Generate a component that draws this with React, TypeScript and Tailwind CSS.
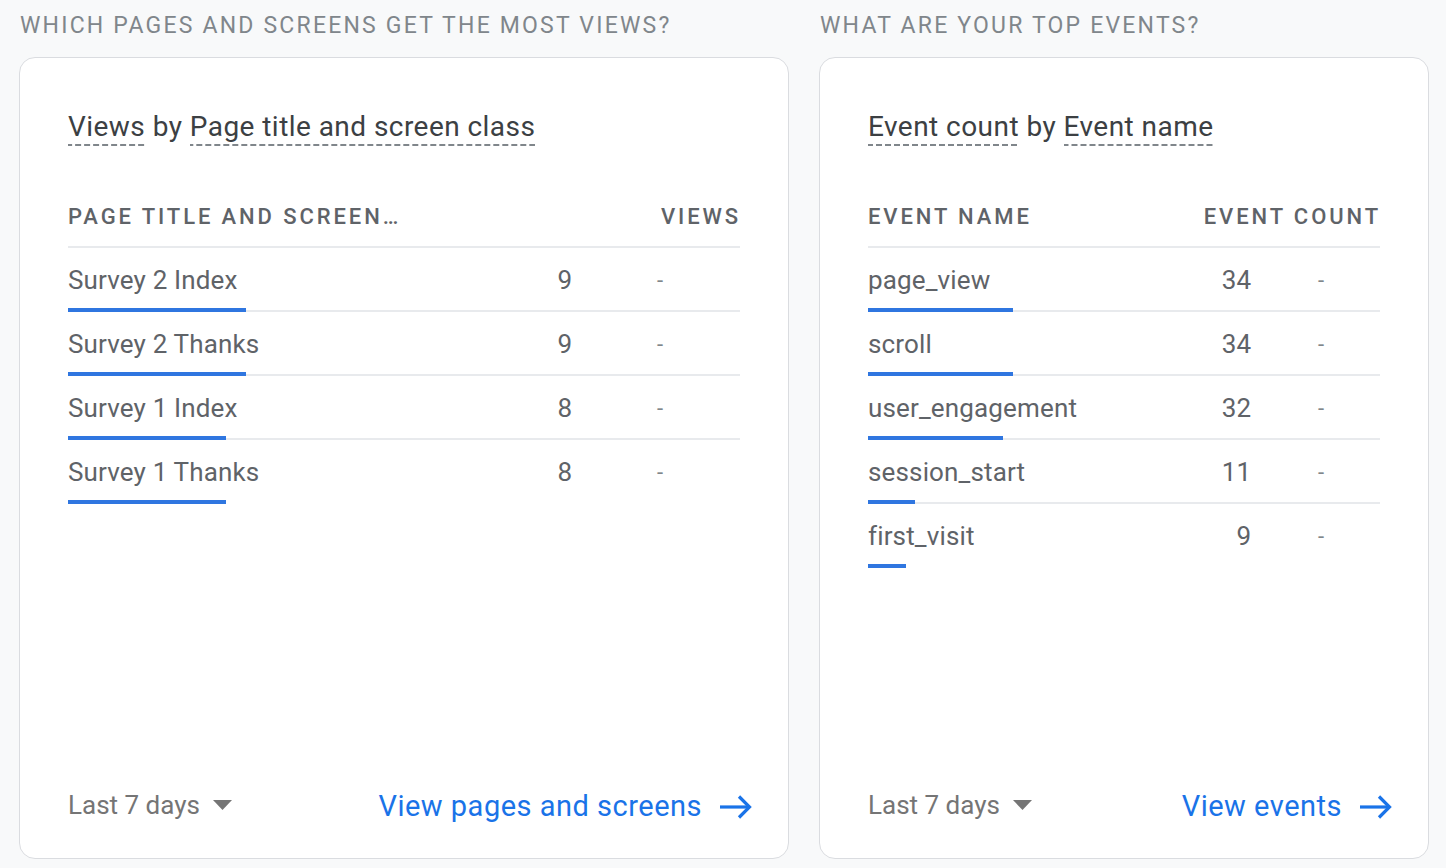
import React from 'react';

type Row = { name: string; value: number; bar: number };

const pageRows: Row[] = [
  { name: 'Survey 2 Index', value: 9, bar: 178 },
  { name: 'Survey 2 Thanks', value: 9, bar: 178 },
  { name: 'Survey 1 Index', value: 8, bar: 158 },
  { name: 'Survey 1 Thanks', value: 8, bar: 158 },
];

const eventRows: Row[] = [
  { name: 'page_view', value: 34, bar: 145 },
  { name: 'scroll', value: 34, bar: 145 },
  { name: 'user_engagement', value: 32, bar: 135 },
  { name: 'session_start', value: 11, bar: 47 },
  { name: 'first_visit', value: 9, bar: 38 },
];

function Dashed({ children }: { children: React.ReactNode }) {
  return (
    <span className="pb-[3px] bg-[linear-gradient(to_right,#80868b_6px,transparent_6px)] bg-[length:9px_2px] bg-repeat-x bg-bottom">
      {children}
    </span>
  );
}

function Arrow() {
  return (
    <svg width="32" height="24" viewBox="0 0 32 24" fill="none" stroke="#1a73e8" strokeWidth="3.2" strokeLinecap="butt" strokeLinejoin="miter">
      <path d="M0 12h29" />
      <path d="M19 1.5 29.5 12 19 22.5" />
    </svg>
  );
}

function Caret() {
  return (
    <svg width="19" height="10" viewBox="0 0 19 10" className="ml-[13px]">
      <path d="M0 0h19L9.5 10z" fill="#757575" />
    </svg>
  );
}

function Card({
  title,
  colA,
  colB,
  rows,
  numRight,
  dashLeft,
  link,
}: {
  title: React.ReactNode;
  colA: string;
  colB: string;
  rows: Row[];
  numRight: number;
  dashLeft: number;
  link: string;
}) {
  return (
    <div className="flex-1 flex flex-col bg-white border border-[#dadce0] rounded-[16px] pt-[51px] pl-[48px] pr-[48px] pb-[33px]">
      <div className="text-[28px] leading-[36px] text-[#3c4043] tracking-[0.45px]">{title}</div>

      <div className="mt-[57px] flex justify-between items-center h-[28px] text-[22px] tracking-[2.9px] text-[#5f6368] font-medium">
        <span>{colA}</span>
        <span className="-mr-[1px]">{colB}</span>
      </div>
      <div className="mt-[16px] border-b-2 border-[#e8eaed]" />

      {rows.map((r, i) => (
        <div
          key={r.name}
          className={
            'relative flex items-center h-[64px] pt-[3px] ' +
            (i === rows.length - 1 ? 'border-b-2 border-transparent' : 'border-b-2 border-[#e8eaed]')
          }
        >
          <span className="flex-1 text-[26px] tracking-[0.15px] text-[#5f6368]">{r.name}</span>
          <span className="absolute text-[26px] text-[#5f6368] text-right" style={{ right: `calc(100% - ${numRight}px)` }}>
            {r.value}
          </span>
          <span className="absolute text-[22px] text-[#80868b]" style={{ left: `${dashLeft}px` }}>
            -
          </span>
          <div className="absolute left-0 bottom-[-2px] h-[4px] bg-[#2f76e0]" style={{ width: `${r.bar}px` }} />
        </div>
      ))}

      <div className="flex-1" />

      <div className="flex items-center justify-between -mr-[12px] h-[40px]">
        <div className="flex items-center text-[26px] text-[#757575]">
          Last 7 days
          <Caret />
        </div>
        <div className="flex items-center text-[29px] tracking-[0.5px] text-[#1a73e8] pt-[4px]">
          {link}
          <span className="ml-[18px] flex items-center">
            <Arrow />
          </span>
        </div>
      </div>
    </div>
  );
}

export default function App() {
  return (
    <div className="h-[868px] bg-[#f8f9fa] font-['Roboto',sans-serif] grid grid-cols-[770px_610px] gap-x-[30px] pl-[19px] pt-[10px] pb-[9px]">
      <div className="flex flex-col">
        <div className="h-[32px] leading-[32px] pl-[1px] text-[23px] tracking-[2.2px] text-[#80868b]">
          WHICH PAGES AND SCREENS GET THE MOST VIEWS?
        </div>
        <div className="mt-[15px] flex-1 flex">
          <Card
            title={
              <>
                <Dashed>Views</Dashed> by <Dashed>Page title and screen class</Dashed>
              </>
            }
            colA="PAGE TITLE AND SCREEN…"
            colB="VIEWS"
            rows={pageRows}
            numRight={504}
            dashLeft={589}
            link="View pages and screens"
          />
        </div>
      </div>
      <div className="flex flex-col">
        <div className="h-[32px] leading-[32px] pl-[1px] text-[23px] tracking-[2.2px] text-[#80868b]">
          WHAT ARE YOUR TOP EVENTS?
        </div>
        <div className="mt-[15px] flex-1 flex">
          <Card
            title={
              <>
                <Dashed>Event count</Dashed> by <Dashed>Event name</Dashed>
              </>
            }
            colA="EVENT NAME"
            colB="EVENT COUNT"
            rows={eventRows}
            numRight={383}
            dashLeft={450}
            link="View events"
          />
        </div>
      </div>
    </div>
  );
}
